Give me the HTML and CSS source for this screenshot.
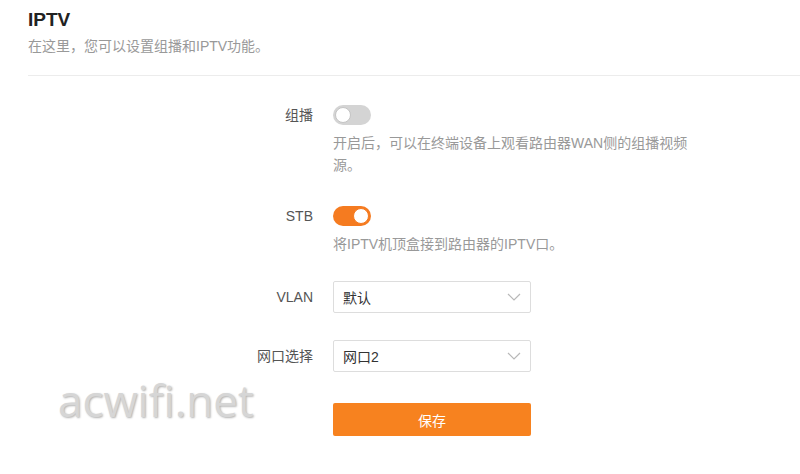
FILE: index.html
```html
<!DOCTYPE html>
<html lang="zh-CN">
	<head>
		<meta charset="UTF-8" />
		<meta name="viewport" content="width=device-width, initial-scale=1.0" />
		<title>IPTV</title>
		<link rel="stylesheet" href="styles.css">
	</head>
	<body>
		<div class="page">
			<header class="page-head">
				<h1 class="page-title">IPTV</h1>
				<p class="page-desc">在这里，您可以设置组播和IPTV功能。</p>
			</header>

			<form class="settings">
				<div class="field field-switch">
					<label class="field-label">组播</label>
					<div class="field-control">
						<span class="switch"></span>
						<p class="hint">开启后，可以在终端设备上观看路由器WAN侧的组播视频源。</p>
					</div>
				</div>

				<div class="field field-switch">
					<label class="field-label">STB</label>
					<div class="field-control">
						<span class="switch on"></span>
						<p class="hint">将IPTV机顶盒接到路由器的IPTV口。</p>
					</div>
				</div>

				<div class="field field-select">
					<label class="field-label">VLAN</label>
					<div class="field-control">
						<div class="select">
							<span>默认</span>
							<svg class="arrow" width="14" height="8" viewBox="0 0 14 8"><polyline points="1,1 7,7 13,1" fill="none" stroke="#b8b8b8" stroke-width="1.2" /></svg>
						</div>
					</div>
				</div>

				<div class="field field-select">
					<label class="field-label">网口选择</label>
					<div class="field-control">
						<div class="select">
							<span>网口2</span>
							<svg class="arrow" width="14" height="8" viewBox="0 0 14 8"><polyline points="1,1 7,7 13,1" fill="none" stroke="#b8b8b8" stroke-width="1.2" /></svg>
						</div>
					</div>
				</div>

				<div class="actions">
					<button type="button" class="btn-save">保存</button>
				</div>
			</form>

			<div class="watermark">acwifi.net</div>
		</div>
	</body>
</html>
```

FILE: styles.css
```css
body {
	margin: 0;
	background: #fff;
	font-family: 'Liberation Sans', 'Noto Sans CJK SC', sans-serif;
	color: #333;
}

.page {
	position: relative;
	height: 474px;
	overflow: hidden;
}

.page-head {
	margin-left: 28px;
	padding-bottom: 19px;
	border-bottom: 1px solid #ececec;
}

.page-title {
	margin: 8px 0 0;
	font-size: 19px;
	line-height: 24px;
	font-weight: bold;
	color: #222;
}

.page-desc {
	margin: 4px 0 0;
	font-size: 14px;
	line-height: 20px;
	color: #999;
}

.settings {
	padding-top: 29px;
}

.field {
	display: grid;
	grid-template-columns: 313px 372px;
	column-gap: 20px;
	align-items: start;
	margin-bottom: 27px;
}
.field-switch {
	margin-bottom: 30px;
}
.field-switch + .field-switch {
	margin-bottom: 26px;
}

.field-label {
	text-align: right;
	font-size: 14px;
	color: #555;
}
.field-switch .field-label {
	line-height: 20px;
}
.field-select .field-label {
	line-height: 32px;
}

.switch {
	display: block;
	position: relative;
	width: 38px;
	height: 20px;
	border-radius: 10px;
	background: #d4d4d4;
}
.switch::after {
	content: '';
	position: absolute;
	top: 2px;
	left: 2px;
	width: 14px;
	height: 14px;
	border-radius: 50%;
	background: #fff;
	border: 1px solid #c4c4c4;
}
.switch.on {
	background: #f57b20;
}
.switch.on::after {
	left: auto;
	right: 2px;
	border-color: #f57b20;
}

.hint {
	margin: 7px 0 0;
	font-size: 14px;
	line-height: 22px;
	color: #999;
}

.select {
	display: flex;
	align-items: center;
	justify-content: space-between;
	box-sizing: border-box;
	width: 198px;
	height: 32px;
	padding: 0 9px 0 9px;
	border: 1px solid #ddd;
	border-radius: 2px;
	font-size: 14px;
	color: #333;
}

.actions {
	padding-left: 333px;
	margin-top: 31px;
}

.btn-save {
	display: block;
	width: 198px;
	height: 33px;
	border: none;
	border-radius: 2px;
	background: #f7821f;
	color: #fff;
	font-family: 'Liberation Sans', 'Noto Sans CJK SC', sans-serif;
	font-size: 14px;
	cursor: pointer;
}

.watermark {
	position: absolute;
	left: 58px;
	top: 378px;
	font-family: 'Open Sans', sans-serif;
	font-size: 44px;
	line-height: 44px;
	color: #d6d6d6;
	text-shadow: 1px 1px 2px rgba(0, 0, 0, 0.3);
	pointer-events: none;
}
```
